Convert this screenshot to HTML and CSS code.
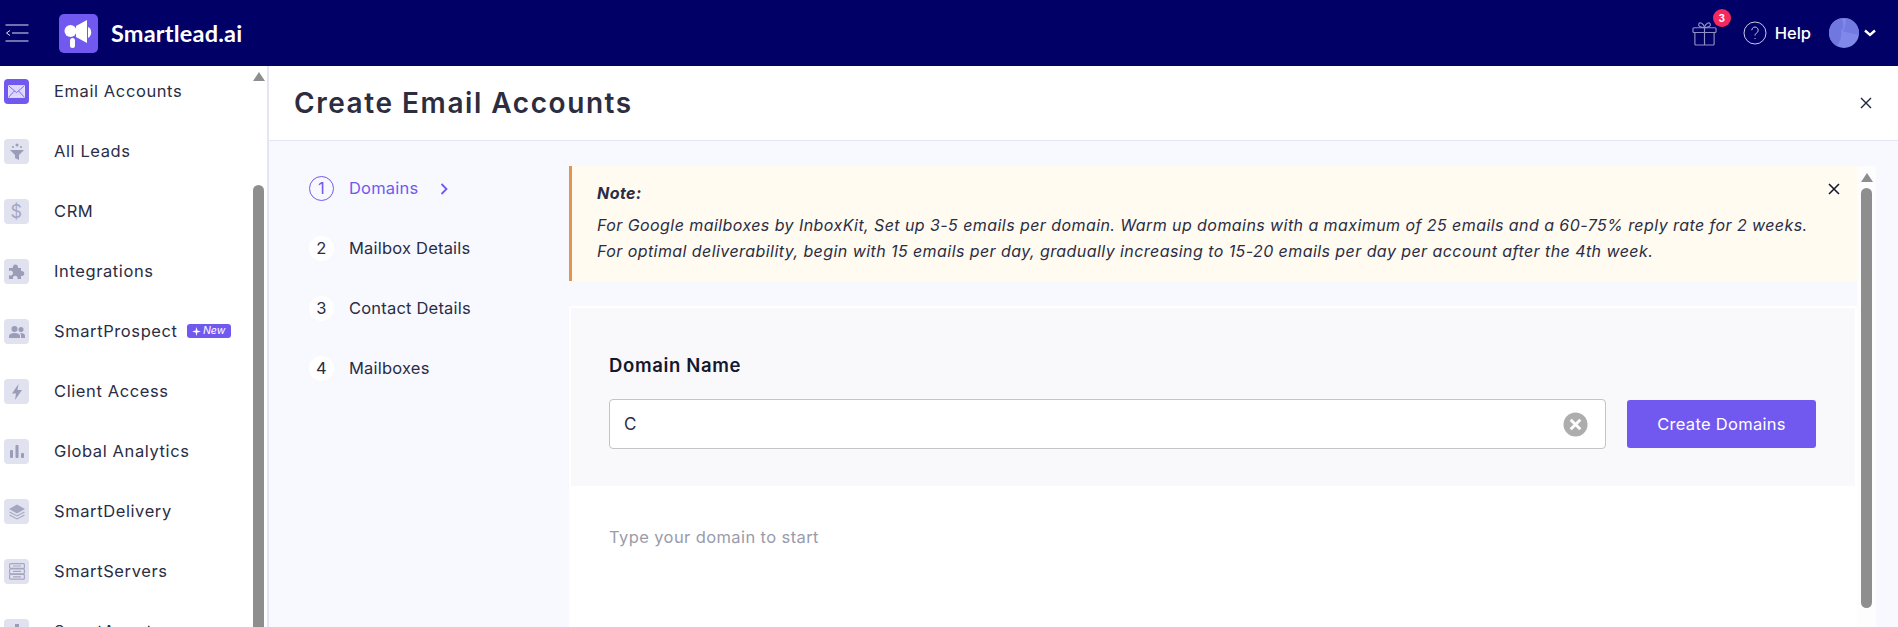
FILE: index.html
```html
<!DOCTYPE html>
<html lang="en">
<head>
<meta charset="utf-8">
<title>Create Email Accounts</title>
<link rel="stylesheet" href="styles.css">
</head>
<body>
<header class="topbar">
  <div class="brand">
    <svg class="menu-icon" viewBox="0 0 24 18" width="24" height="18" fill="none" stroke="#dfe0f2" stroke-width="1"><path d="M0.500 1H23.500M0.500 17H23.500M7 9H23.500M5 6.500L1.500 9L5 11.500"/></svg>
    <svg class="logo" viewBox="0 0 39 39" width="39" height="39"><rect width="39" height="39" rx="5" fill="#7159f0"/><circle cx="11.500" cy="17" r="6" fill="#fff"/><path d="M17 12L28 6V29L17 23Z" fill="#fff"/><path d="M29 13C33 14 33.500 22 29 24Z" fill="#fff"/><rect x="11" y="24" width="5" height="10" rx="2.500" fill="#fff"/></svg>
    <span class="logo-text">Smartlead.ai</span>
  </div>
  <div class="top-actions">
    <div class="gift">
      <svg viewBox="0 0 26 26" width="25" height="25" fill="none" stroke="#8f90c4" stroke-width="1.200"><rect x="1" y="7" width="24" height="5" rx="1"/><path d="M3 12V24a1 1 0 0 0 1 1H22a1 1 0 0 0 1-1V12M13 7V25M13 7C9 7 6 5 7 3C8 1 12 2 13 7C14 2 18 1 19 3C20 5 17 7 13 7Z"/></svg>
      <span class="badge">3</span>
    </div>
    <svg class="help-icon" viewBox="0 0 24 24" width="24" height="24" fill="none" stroke="#c9cae4" stroke-width="1"><circle cx="12" cy="12" r="11"/><path d="M8.800 9.200a3.200 3.200 0 1 1 4.800 2.800c-1 .6-1.600 1.200-1.600 2.600M12 17v1"/></svg>
    <span class="help">Help</span>
    <svg class="avatar" viewBox="0 0 30 30" width="30" height="30"><circle cx="15" cy="15" r="15" fill="#8088ea"/><path d="M12 0.300C15 5 15 10 12 13C13 18 11 24 8 28C3 25 0 20 0 15C0 7 5 1.500 12 0.300Z" fill="#7078df"/><path d="M17 0.200C24 1 30 7 30 15L30 17L14 13.500C16 9 17 5 17 0.200Z" fill="#737be2"/></svg>
    <svg class="caret" viewBox="0 0 12 8" width="12" height="8" fill="none" stroke="#fff" stroke-width="2.400"><path d="M1 1.500L6 6L11 1.500"/></svg>
  </div>
</header>
<div class="body-row">
  <nav class="sidebar">
    <div class="nav-list">
      <div class="nav-item"><span class="nav-icon active"><svg viewBox="0 0 16 12" width="17" height="13" fill="none" stroke="#e9e6ff" stroke-width="1.100"><rect x=".6" y=".6" width="14.800" height="10.800" fill="#dcd6fd"/><path d="M.6.6L8 7L15.400.6M.6 11.400L6 5.500M15.400 11.400L10 5.500" stroke="#7159f0" stroke-width=".8"/></svg></span>Email Accounts</div>
      <div class="nav-item"><span class="nav-icon"><svg viewBox="0 0 14 18" width="14" height="18" fill="#9a9cb8"><path d="M0 7H14L9 12V17L5 15V12Z"/><circle cx="7" cy="2" r="1.500"/><circle cx="3" cy="4" r="1"/><circle cx="11" cy="4" r="1"/></svg></span>All Leads</div>
      <div class="nav-item"><span class="nav-icon"><span class="dollar">$</span></span>CRM</div>
      <div class="nav-item"><span class="nav-icon"><svg viewBox="0 0 17 17" width="17" height="17" fill="#9a9cb8"><path d="M1 5H4.800A2.700 2.700 0 1 1 10 5H13V8A2.600 2.600 0 1 1 13 13V16H9.500A2.400 2.400 0 1 0 5 16H1V12A2.500 2.500 0 1 0 1 8Z"/></svg></span>Integrations</div>
      <div class="nav-item"><span class="nav-icon"><svg viewBox="0 0 16 12" width="16" height="12" fill="#9a9cb8"><circle cx="5.500" cy="3" r="3"/><circle cx="12" cy="3.500" r="2.500"/><path d="M0 12V10C0 8 2.500 7 5.500 7S11 8 11 10V12ZM12 12V9.500C12 8.500 11.500 7.500 11 7C13.500 6.800 16 7.800 16 9.800V12Z"/></svg></span><span>SmartProspect</span><span class="new-tag"><svg viewBox="0 0 10 10" width="9" height="9" fill="#fff"><path d="M5 0L6 4L10 5L6 6L5 10L4 6L0 5L4 4Z"/></svg>New</span></div>
      <div class="nav-item"><span class="nav-icon"><svg viewBox="0 0 10 16" width="10" height="16" fill="#9a9cb8"><path d="M6.500 0L0 9.500H4L3 16L10 6H5.500Z"/></svg></span>Client Access</div>
      <div class="nav-item"><span class="nav-icon"><svg viewBox="0 0 14 13" width="14" height="13" fill="#9a9cb8"><rect y="5" width="3" height="8" rx="1"/><rect x="5.500" width="3" height="13" rx="1"/><rect x="11" y="8" width="3" height="5" rx="1"/></svg></span>Global Analytics</div>
      <div class="nav-item"><span class="nav-icon"><svg viewBox="0 0 16 16" width="16" height="16" fill="none" stroke="#a5a7c1" stroke-width="1.100"><path d="M8 .5L16 5L8 9.500L0 5Z" fill="#a5a7c1" stroke="none"/><path d="M.5 8L8 12L15.500 8M.5 11L8 15L15.500 11"/></svg></span>SmartDelivery</div>
      <div class="nav-item"><span class="nav-icon"><svg viewBox="0 0 16 17" width="16" height="17" fill="none" stroke="#a5a7c1" stroke-width="1.200"><rect x=".6" y=".6" width="14.800" height="4.800" rx="1"/><rect x=".6" y="6" width="14.800" height="4.800" rx="1"/><rect x=".6" y="11.400" width="14.800" height="4.800" rx="1"/><path d="M4 3H12M4 8.400H12M4 13.800H12"/></svg></span>SmartServers</div>
      <div class="nav-item"><span class="nav-icon"><svg viewBox="0 0 16 16" width="16" height="16" fill="#9a9cb8"><rect x="2" y="3" width="12" height="12" rx="2"/><rect x="6" y="0" width="4" height="3"/></svg></span>SmartAgents</div>
    </div>
    <div class="nav-scroll">
      <span class="scroll-up"></span>
      <span class="nav-thumb"></span>
    </div>
  </nav>
  <main class="panel">
    <div class="panel-head">
      <h1>Create Email Accounts</h1>
      <svg class="panel-close" viewBox="0 0 12 12" width="12" height="12" fill="none" stroke="#1c2440" stroke-width="1.400"><path d="M1 1L11 11M11 1L1 11"/></svg>
    </div>
    <div class="panel-body">
      <ol class="steps">
        <li class="step current"><span class="num">1</span>Domains<svg class="step-arrow" viewBox="0 0 8 12" width="8" height="12" fill="none" stroke="#7159f0" stroke-width="1.800"><path d="M1.500 1L6.500 6L1.500 11"/></svg></li>
        <li class="step"><span class="num">2</span>Mailbox Details</li>
        <li class="step"><span class="num">3</span>Contact Details</li>
        <li class="step"><span class="num">4</span>Mailboxes</li>
      </ol>
      <div class="content">
        <div class="note">
          <p class="note-title">Note:</p>
          <p>For Google mailboxes by InboxKit, Set up 3-5 emails per domain. Warm up domains with a maximum of 25 emails and a 60-75% reply rate for 2 weeks.</p>
          <p>For optimal deliverability, begin with 15 emails per day, gradually increasing to 15-20 emails per day per account after the 4th week.</p>
          <svg class="note-close" viewBox="0 0 12 12" width="12" height="12" fill="none" stroke="#10142c" stroke-width="1.500"><path d="M1 1L11 11M11 1L1 11"/></svg>
        </div>
        <section class="domain-card">
          <label class="domain-label">Domain Name</label>
          <div class="domain-row">
            <div class="domain-input"><span>C</span>
              <svg viewBox="0 0 26 26" width="25" height="25"><circle cx="13" cy="13" r="12.500" fill="#adadad"/><path d="M8 8L18 18M18 8L8 18" stroke="#fff" stroke-width="3"/></svg>
            </div>
            <button class="create-btn">Create Domains</button>
          </div>
        </section>
        <p class="hint">Type your domain to start</p>
      </div>
      <div class="content-scroll">
        <span class="scroll-up"></span>
        <span class="content-thumb"></span>
      </div>
    </div>
  </main>
</div>
</body>
</html>
```
FILE: styles.css
```css
* { box-sizing: border-box; }
html, body { margin: 0; height: 100%; overflow: hidden; }
body { font-family: "Inter", "Liberation Sans", sans-serif; color: #2a2d45; background: #f8f9ff; display: flex; flex-direction: column; }
.topbar { height: 66px; flex: none; background: #000066; display: flex; align-items: center; justify-content: space-between; }
.brand { display: flex; align-items: center; }
.menu-icon { margin-left: 5px; }
.logo { margin-left: 30px; }
.logo-text { margin-left: 13px; color: #fff; font-family: "Lato", sans-serif; font-weight: 700; font-size: 23.5px; letter-spacing: .2px; }
.top-actions { display: flex; align-items: center; margin-right: 22px; }
.gift { position: relative; display: flex; margin-right: 26px; }
.badge { position: absolute; left: 21px; top: -12px; width: 18px; height: 18px; border-radius: 50%; background: #f6295f; color: #fff; font-size: 10px; font-weight: 700; display: flex; align-items: center; justify-content: center; }
.help { color: #fff; font-size: 16.5px; font-weight: 500; margin-left: 8px; }
.avatar { margin-left: 18px; }
.caret { margin-left: 5px; }
.body-row { flex: 1; display: flex; min-height: 0; }
.sidebar { width: 269px; flex: none; background: #fff; border-right: 2px solid #e4e5f4; display: flex; overflow: hidden; }
.nav-list { width: 253px; flex: none; padding: 13px 0 0 4px; }
.nav-item { height: 60px; display: flex; align-items: flex-start; font-size: 16.5px; letter-spacing: .6px; color: #2a2d45; line-height: 25px; }
.nav-icon { width: 25px; height: 25px; flex: none; margin-right: 25px; border-radius: 4px; background: #e1e2ef; display: flex; align-items: center; justify-content: center; }
.nav-icon.active { background: #7159f0; }
.dollar { color: #a5a7c1; font-size: 18px; }
.new-tag { margin-left: 9px; margin-top: 5px; height: 14px; width: 44px; background: #7159f0; border-radius: 3px; color: #fff; font-size: 10.5px; letter-spacing: 0; font-style: italic; line-height: 14px; display: flex; align-items: center; justify-content: center; gap: 2px; }
.nav-scroll { width: 11px; flex: none; display: flex; flex-direction: column; align-items: center; padding-top: 6px; }
.scroll-up { width: 0; height: 0; border-left: 6px solid transparent; border-right: 6px solid transparent; border-bottom: 9px solid #8e8e8e; }
.nav-thumb { width: 11px; flex: 1; margin-top: 104px; border-radius: 6px 6px 0 0; background: #8e8e8e; }
.panel { flex: 1; min-width: 0; display: flex; flex-direction: column; }
.panel-head { height: 75px; flex: none; background: #fff; border-bottom: 1px solid #e4e5f4; display: flex; align-items: center; justify-content: space-between; padding: 0 26px 0 25px; }
h1 { margin: 0; font-size: 28px; font-weight: 600; color: #2c2d3f; letter-spacing: 1.55px; }
.panel-body { flex: 1; min-height: 0; display: flex; padding: 25px 22px 0 0; }
.steps { list-style: none; margin: 0; padding: 10px 0 0 40px; width: 300px; flex: none; }
.step { height: 60px; display: flex; align-items: flex-start; font-size: 16.5px; letter-spacing: .2px; line-height: 25px; color: #2a2d45; }
.num { width: 25px; height: 25px; flex: none; margin-right: 15px; border-radius: 50%; background: #fff; display: flex; align-items: center; justify-content: center; }
.current { color: #7159f0; }
.current .num { background: none; border: 1px solid #7159f0; }
.step-arrow { margin: 7px 0 0 22px; }
.content { width: 1288px; flex: none; background: #fff; }
.note { position: relative; height: 115px; background: #fffbf0; border-left: 3px solid #de9650; padding: 17px 0 0 25px; font-size: 16px; font-style: italic; letter-spacing: .43px; line-height: 26px; color: #2a2d45; }
.note p { margin: 0; }
.note .note-title { font-weight: 700; margin-bottom: 9px; line-height: 20px; }
.note-close { position: absolute; right: 17px; top: 17px; }
.domain-card { margin: 27px 2px 0; height: 178px; background: #f9f9fc; padding: 45px 39px 0 38px; position: relative; }
.domain-card::before { content: ""; position: absolute; left: -2px; right: -2px; top: -27px; height: 25px; background: #f8f9ff; }
.domain-label { display: block; font-size: 18.5px; font-weight: 600; letter-spacing: .65px; color: #15172c; line-height: 24px; }
.domain-row { display: flex; margin-top: 22px; gap: 21px; }
.domain-input { flex: 1; height: 50px; background: #fff; border: 1px solid #c4c4c8; border-radius: 4px; display: flex; align-items: center; justify-content: space-between; padding: 0 17px 0 14px; font-size: 17px; color: #2a2d45; }
.create-btn { width: 189px; height: 48px; margin-top: 1px; background: #7159f0; border: 0; border-radius: 3px; color: #fff; font-family: inherit; font-size: 16.5px; letter-spacing: .3px; }
.hint { margin: 41px 0 0 40px; font-size: 16.5px; letter-spacing: .4px; color: #9a9bab; }
.content-scroll { width: 19px; flex: none; background: #fdfdfd; display: flex; flex-direction: column; align-items: center; padding: 7px 0 19px; }
.content-thumb { width: 11px; flex: 1; margin-top: 6px; border-radius: 6px; background: #8e8e8e; }
```
